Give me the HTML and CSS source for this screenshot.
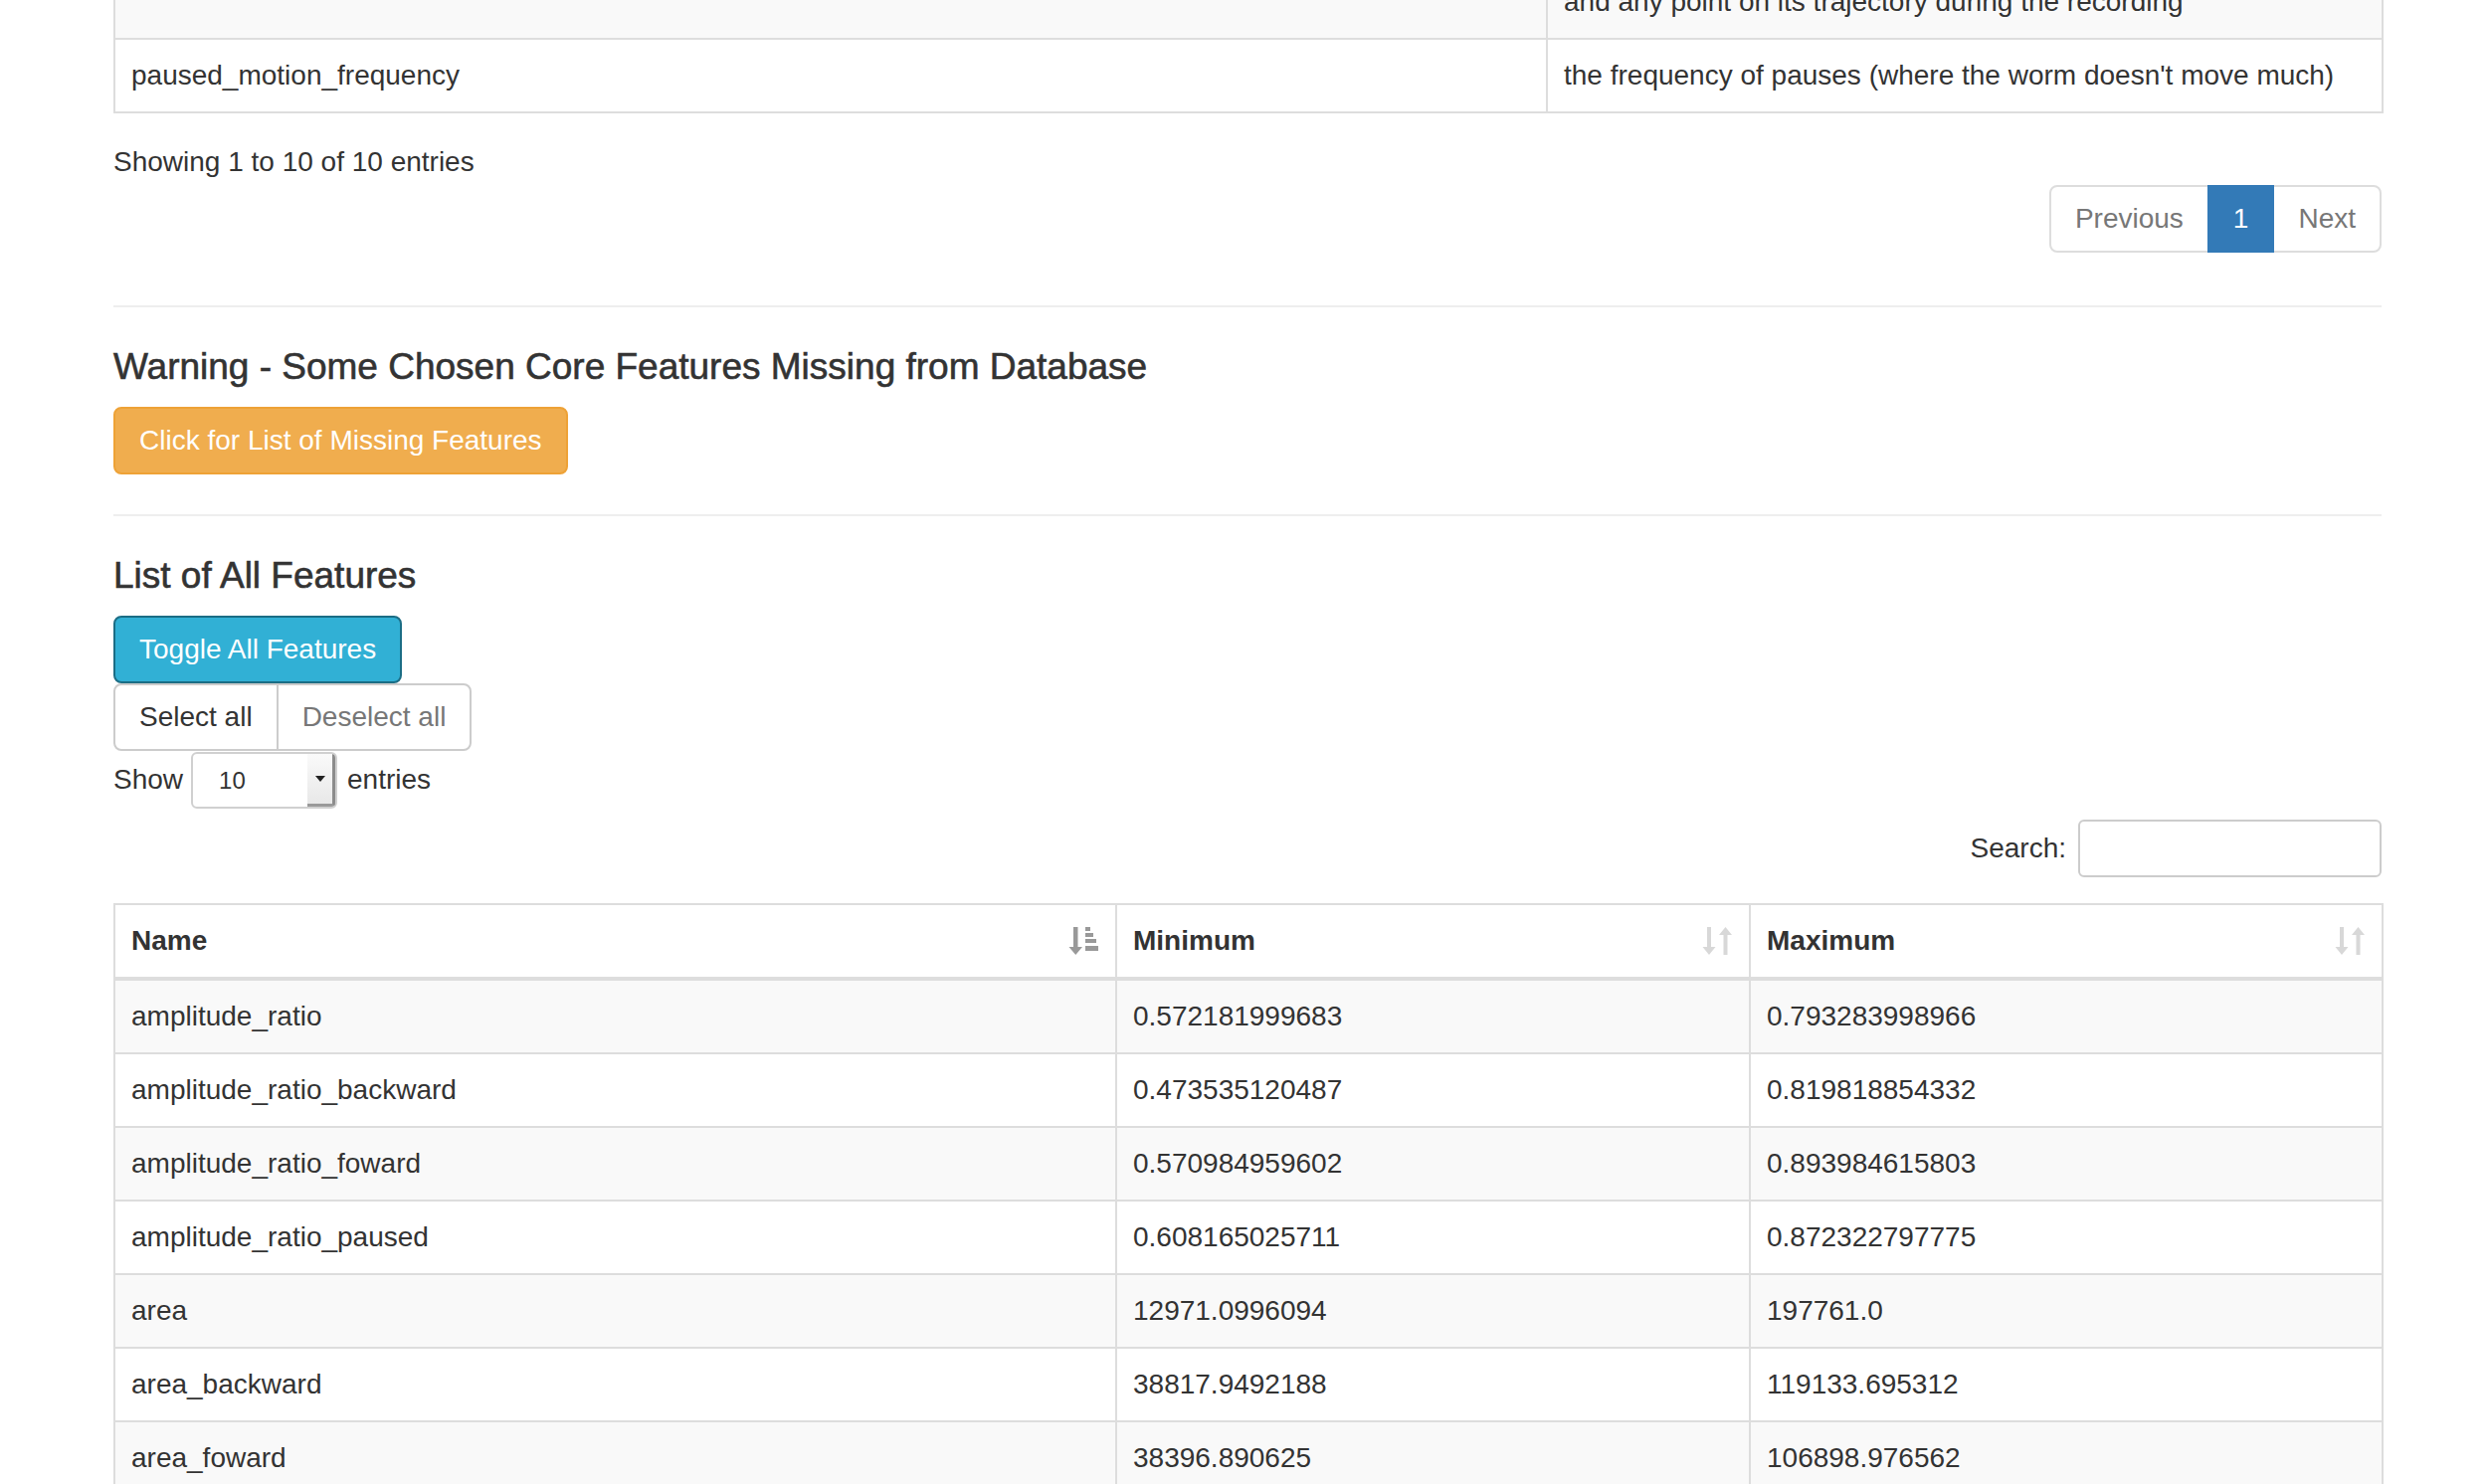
FILE: index.html
```html
<!DOCTYPE html>
<html>
<head>
<meta charset="utf-8">
<title>Features</title>
<link rel="stylesheet" href="styles.css">
</head>
<body>
<div class="container">
  <table class="tbl tbl-top">
    <colgroup><col class="c-top-name"><col class="c-top-desc"></colgroup>
    <tbody>
      <tr class="odd"><td>path_range</td><td>the distance between the worm's starting position<br>and any point on its trajectory during the recording</td></tr>
      <tr><td>paused_motion_frequency</td><td>the frequency of pauses (where the worm doesn't move much)</td></tr>
    </tbody>
  </table>

  <div class="dt-info">Showing 1 to 10 of 10 entries</div>
  <div class="dt-paginate">
    <ul class="pagination">
      <li class="disabled"><a>Previous</a></li>
      <li class="active"><a>1</a></li>
      <li class="disabled"><a>Next</a></li>
    </ul>
  </div>

  <hr class="sep sep-first">
  <h4 class="title">Warning - Some Chosen Core Features Missing from Database</h4>
  <button class="btn btn-warning">Click for List of Missing Features</button>
  <hr class="sep">
  <h4 class="title">List of All Features</h4>
  <div class="btn-stack">
    <button class="btn btn-info">Toggle All Features</button>
    <div class="btn-group">
      <button class="btn btn-default">Select all</button>
      <button class="btn btn-default btn-muted">Deselect all</button>
    </div>
  </div>

  <div class="dt-length">
    <span>Show</span>
    <span class="select"><span class="select-val">10</span><span class="select-arrow"><span class="caret"></span></span></span>
    <span>entries</span>
  </div>
  <div class="dt-filter">
    <span>Search:</span>
    <span class="search-input"></span>
  </div>

  <table class="tbl tbl-main">
    <colgroup><col class="c-name"><col class="c-min"><col class="c-max"></colgroup>
    <thead>
      <tr>
        <th><div class="th-in"><span>Name</span>
          <svg class="sort-icon sort-asc" viewBox="0 0 34 32" width="34" height="32"><rect x="6" y="2" width="4.5" height="21"/><polygon points="1.5,22 15,22 8.25,30"/><rect x="18" y="2" width="5" height="4"/><rect x="18" y="8" width="8" height="4"/><rect x="18" y="14" width="11" height="4"/><rect x="18" y="21" width="13" height="5"/></svg>
        </div></th>
        <th><div class="th-in"><span>Minimum</span>
          <svg class="sort-icon sort-both" viewBox="0 0 34 32" width="34" height="32"><rect x="6" y="2" width="4" height="21"/><polygon points="1.5,22 14.5,22 8,30"/><polygon points="18,10 31,10 24.5,2"/><rect x="22.5" y="9" width="4" height="21"/></svg>
        </div></th>
        <th><div class="th-in"><span>Maximum</span>
          <svg class="sort-icon sort-both" viewBox="0 0 34 32" width="34" height="32"><rect x="6" y="2" width="4" height="21"/><polygon points="1.5,22 14.5,22 8,30"/><polygon points="18,10 31,10 24.5,2"/><rect x="22.5" y="9" width="4" height="21"/></svg>
        </div></th>
      </tr>
    </thead>
    <tbody>
      <tr class="odd"><td>amplitude_ratio</td><td>0.572181999683</td><td>0.793283998966</td></tr>
      <tr><td>amplitude_ratio_backward</td><td>0.473535120487</td><td>0.819818854332</td></tr>
      <tr class="odd"><td>amplitude_ratio_foward</td><td>0.570984959602</td><td>0.893984615803</td></tr>
      <tr><td>amplitude_ratio_paused</td><td>0.608165025711</td><td>0.872322797775</td></tr>
      <tr class="odd"><td>area</td><td>12971.0996094</td><td>197761.0</td></tr>
      <tr><td>area_backward</td><td>38817.9492188</td><td>119133.695312</td></tr>
      <tr class="odd"><td>area_foward</td><td>38396.890625</td><td>106898.976562</td></tr>
      <tr><td>area_paused</td><td>10221.4375</td><td>182405.0</td></tr>
    </tbody>
  </table>
</div>
</body>
</html>
```

FILE: styles.css
```css
* { box-sizing: border-box; }

html, body {
  margin: 0;
  padding: 0;
  background: #fff;
}

body {
  font-family: "Liberation Sans", Arial, sans-serif;
  font-size: 28px;
  line-height: 40px;
  color: #333;
  overflow: hidden;
  height: 1492px;
}

.container {
  width: 2280px;
  margin-left: 114px;
}

/* tables */
.tbl {
  width: 100%;
  table-layout: fixed;
  border-collapse: separate;
  border-spacing: 0;
  border-top: 2px solid #ddd;
  border-left: 2px solid #ddd;
}

.tbl td, .tbl th {
  padding: 16px;
  border-right: 2px solid #ddd;
  border-bottom: 2px solid #ddd;
  text-align: left;
  vertical-align: top;
  white-space: nowrap;
  overflow: hidden;
}

.tbl tr.odd td { background: #f9f9f9; }

.tbl-top { margin-top: -76px; }
.c-top-name { width: 1440px; }
.c-top-desc { width: 840px; }

/* info + pagination */
.dt-info {
  margin-top: 12px;
  padding-top: 17px;
}

.dt-paginate {
  display: flex;
  justify-content: flex-end;
  margin-top: 3px;
}

.pagination {
  display: flex;
  margin: 0;
  padding: 0;
  list-style: none;
}

.pagination li a {
  display: block;
  padding: 12px 24px;
  line-height: 40px;
  border: 2px solid #ddd;
  margin-left: -2px;
  color: #777;
  background: #fff;
}

.pagination li:first-child a {
  margin-left: 0;
  border-radius: 8px 0 0 8px;
}

.pagination li:last-child a { border-radius: 0 8px 8px 0; }

.pagination li.active a {
  background: #337ab7;
  border-color: #337ab7;
  color: #fff;
  position: relative;
}

/* separators & headings */
.sep {
  border: 0;
  border-top: 2px solid #eee;
  margin: 40px 0;
}

.sep-first { margin-top: 53px; }

.title {
  font-size: 37px;
  line-height: 40px;
  font-weight: normal;
  -webkit-text-stroke: 0.6px #333;
  margin: 0 0 20px;
  color: #333;
}

/* buttons */
.btn {
  display: inline-block;
  font-family: inherit;
  font-size: 28px;
  line-height: 40px;
  padding: 12px 24px;
  border: 2px solid transparent;
  border-radius: 8px;
  margin: 0;
  cursor: pointer;
}

.btn-warning {
  background: #f0ad4e;
  border-color: #eea236;
  color: #fff;
}

.btn-info {
  background: #31b0d5;
  border-color: #1b6d85;
  color: #fff;
}

.btn-stack {
  display: flex;
  flex-direction: column;
  align-items: flex-start;
}

.btn-group { display: flex; }

.btn-default {
  background: #fff;
  border-color: #ccc;
  color: #333;
}

.btn-group .btn:first-child { border-radius: 8px 0 0 8px; }
.btn-group .btn:last-child { border-radius: 0 8px 8px 0; margin-left: -2px; }
.btn-muted { color: #777; }

/* length / filter */
.dt-length {
  display: flex;
  align-items: center;
  height: 58px;
}

.select {
  display: flex;
  width: 147px;
  height: 57px;
  margin: 0 10px 0 8px;
  border: 2px solid #d0d0d0;
  border-radius: 6px;
  overflow: hidden;
  background: #fff;
}

.select-val {
  flex: 1;
  font-size: 24px;
  line-height: 53px;
  padding-left: 26px;
}

.select-arrow {
  width: 28px;
  background: linear-gradient(#fafafa, #e8e8e8);
  border-right: 3px solid #8c8c8c;
  border-bottom: 3px solid #9a9a9a;
  display: flex;
  align-items: center;
  justify-content: center;
}

.caret {
  width: 0;
  height: 0;
  border-left: 5px solid transparent;
  border-right: 5px solid transparent;
  border-top: 6px solid #222;
}

.dt-filter {
  display: flex;
  justify-content: flex-end;
  align-items: center;
  margin-top: 10px;
  height: 60px;
}

.search-input {
  width: 305px;
  height: 58px;
  margin-left: 12px;
  border: 2px solid #ccc;
  border-radius: 6px;
}

/* main table */
.tbl-main { margin-top: 25px; }
.c-name { width: 1007px; }
.c-min { width: 637px; }
.c-max { width: 636px; }

.tbl-main th {
  font-weight: bold;
  border-bottom-width: 4px;
  padding-right: 14px;
}

.th-in {
  display: flex;
  justify-content: space-between;
  align-items: center;
}

.sort-icon { flex: none; }
.sort-asc { fill: #999; }
.sort-both { fill: #d8d8d8; }
```
